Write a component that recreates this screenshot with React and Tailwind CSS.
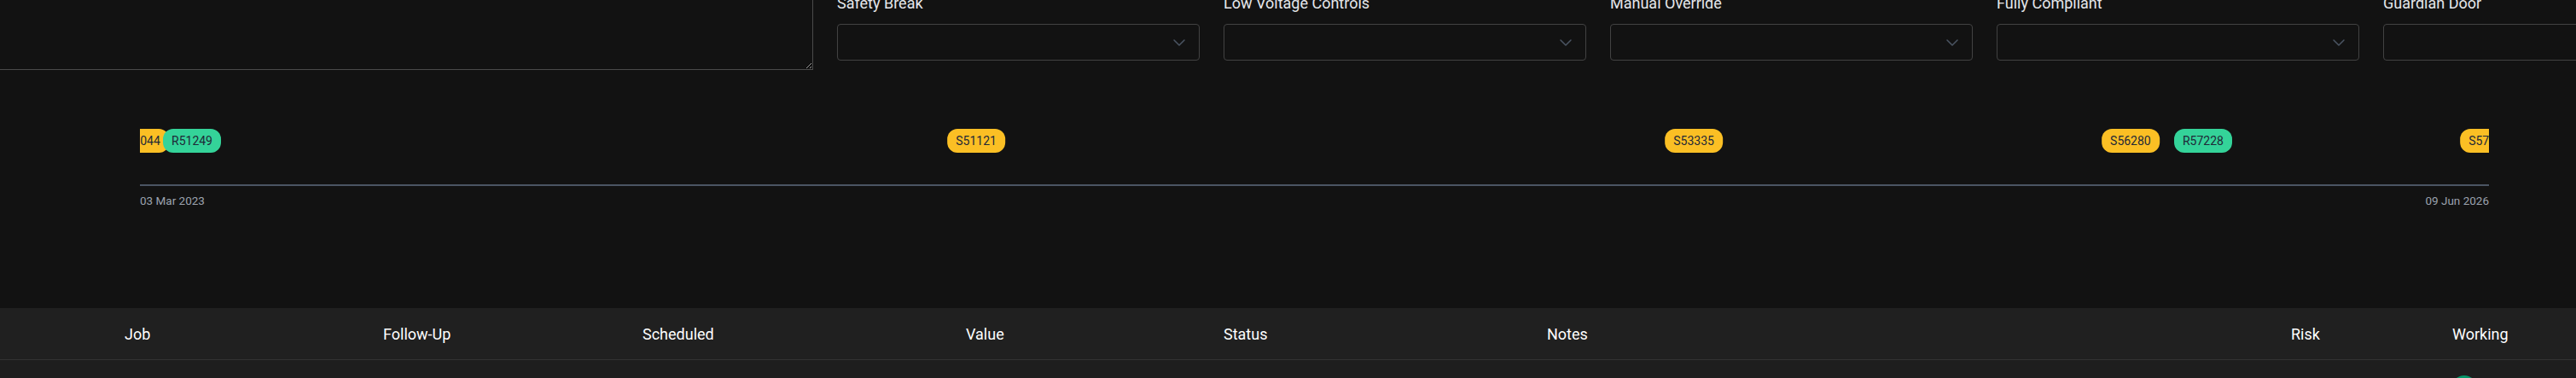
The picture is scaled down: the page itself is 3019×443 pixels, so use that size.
import { ChevronDown } from 'lucide-react';

const filters = ['Safety Break', 'Low Voltage Controls', 'Manual Override', 'Fully Compliant', 'Guardian Door'];

// pos = % along the timeline (start date -> end date)
const events = [
    { id: 'S51044', pos: 0, kind: 'service' },
    { id: 'R51249', pos: 2.216, kind: 'repair' },
    { id: 'S51121', pos: 35.6, kind: 'service' },
    { id: 'S53335', pos: 66.15, kind: 'service' },
    { id: 'S56280', pos: 84.74, kind: 'service' },
    { id: 'R57228', pos: 87.83, kind: 'repair' },
    { id: 'S57914', pos: 100, kind: 'service' },
];

const columns = ['', 'Job', 'Follow-Up', 'Scheduled', 'Value', 'Status', 'Notes', 'Risk', 'Working'];

function FilterSelect({ label }) {
    return (
        <div className="flex-none w-[425px]">
            <p className="text-[18px] leading-[27px] text-[#e5e7eb] mb-[11px]">{label}</p>
            <div className="h-[43px] border border-[#424242] rounded-[4px] flex items-center justify-end pr-[11px]">
                <ChevronDown size={24} strokeWidth={1.5} className="text-[#4b5563]" />
            </div>
        </div>
    );
}

function EventChip({ event }) {
    const color = event.kind === 'repair' ? 'bg-[#34d399]' : 'bg-[#fbbf24]';
    return (
        <div
            className={`absolute top-0 -translate-x-1/2 h-[28px] px-[10px] rounded-xl flex items-center text-[14px] text-[#1f2937] whitespace-nowrap ${color}`}
            style={{ left: `${event.pos}%` }}
        >
            {event.id}
        </div>
    );
}

export default function App() {
    return (
        <div className="min-h-screen bg-[#121212] overflow-hidden font-['Roboto',sans-serif]">
            <div className="-mt-[10px]">
                {/* Description + filters */}
                <div className="flex items-start gap-[28px]">
                    <textarea
                        className="flex-none -ml-[24px] w-[977px] h-[92px] bg-transparent border border-[#4a4a4a] outline-none"
                        defaultValue=""
                    />
                    <div className="flex gap-[28px]">
                        {filters.map((f) => (
                            <FilterSelect key={f} label={f} />
                        ))}
                    </div>
                </div>

                {/* Timeline */}
                <div className="mt-[69px] ml-[164px] w-[2753px]">
                    <div className="relative h-[28px] overflow-hidden">
                        {events.map((e) => (
                            <EventChip key={e.id} event={e} />
                        ))}
                    </div>
                    <div className="mt-[37px] h-[2px] bg-[#4b5563]" />
                    <div className="mt-[7px] flex justify-between text-[13.5px] leading-[20px] text-[#9ca3af]">
                        <span>03 Mar 2023</span>
                        <span>09 Jun 2026</span>
                    </div>
                </div>

                {/* Table */}
                <div className="mt-[116px]">
                    <div className="grid grid-cols-[130px_303px_304px_379px_302px_379px_872px_189px_1fr] h-[61px] bg-[#202020] border-b border-[#333333] items-center">
                        {columns.map((c, i) => (
                            <div key={i} className="px-4 text-[18px] text-white whitespace-nowrap">
                                {c}
                            </div>
                        ))}
                    </div>
                    <div className="grid grid-cols-[130px_303px_304px_379px_302px_379px_872px_189px_1fr] h-[61px] bg-[#1e1e1e] items-start pt-[18px]">
                        <div className="col-start-9 px-4">
                            <div className="w-[28px] h-[28px] rounded-full bg-[#059669]" />
                        </div>
                    </div>
                </div>
            </div>
        </div>
    );
}
